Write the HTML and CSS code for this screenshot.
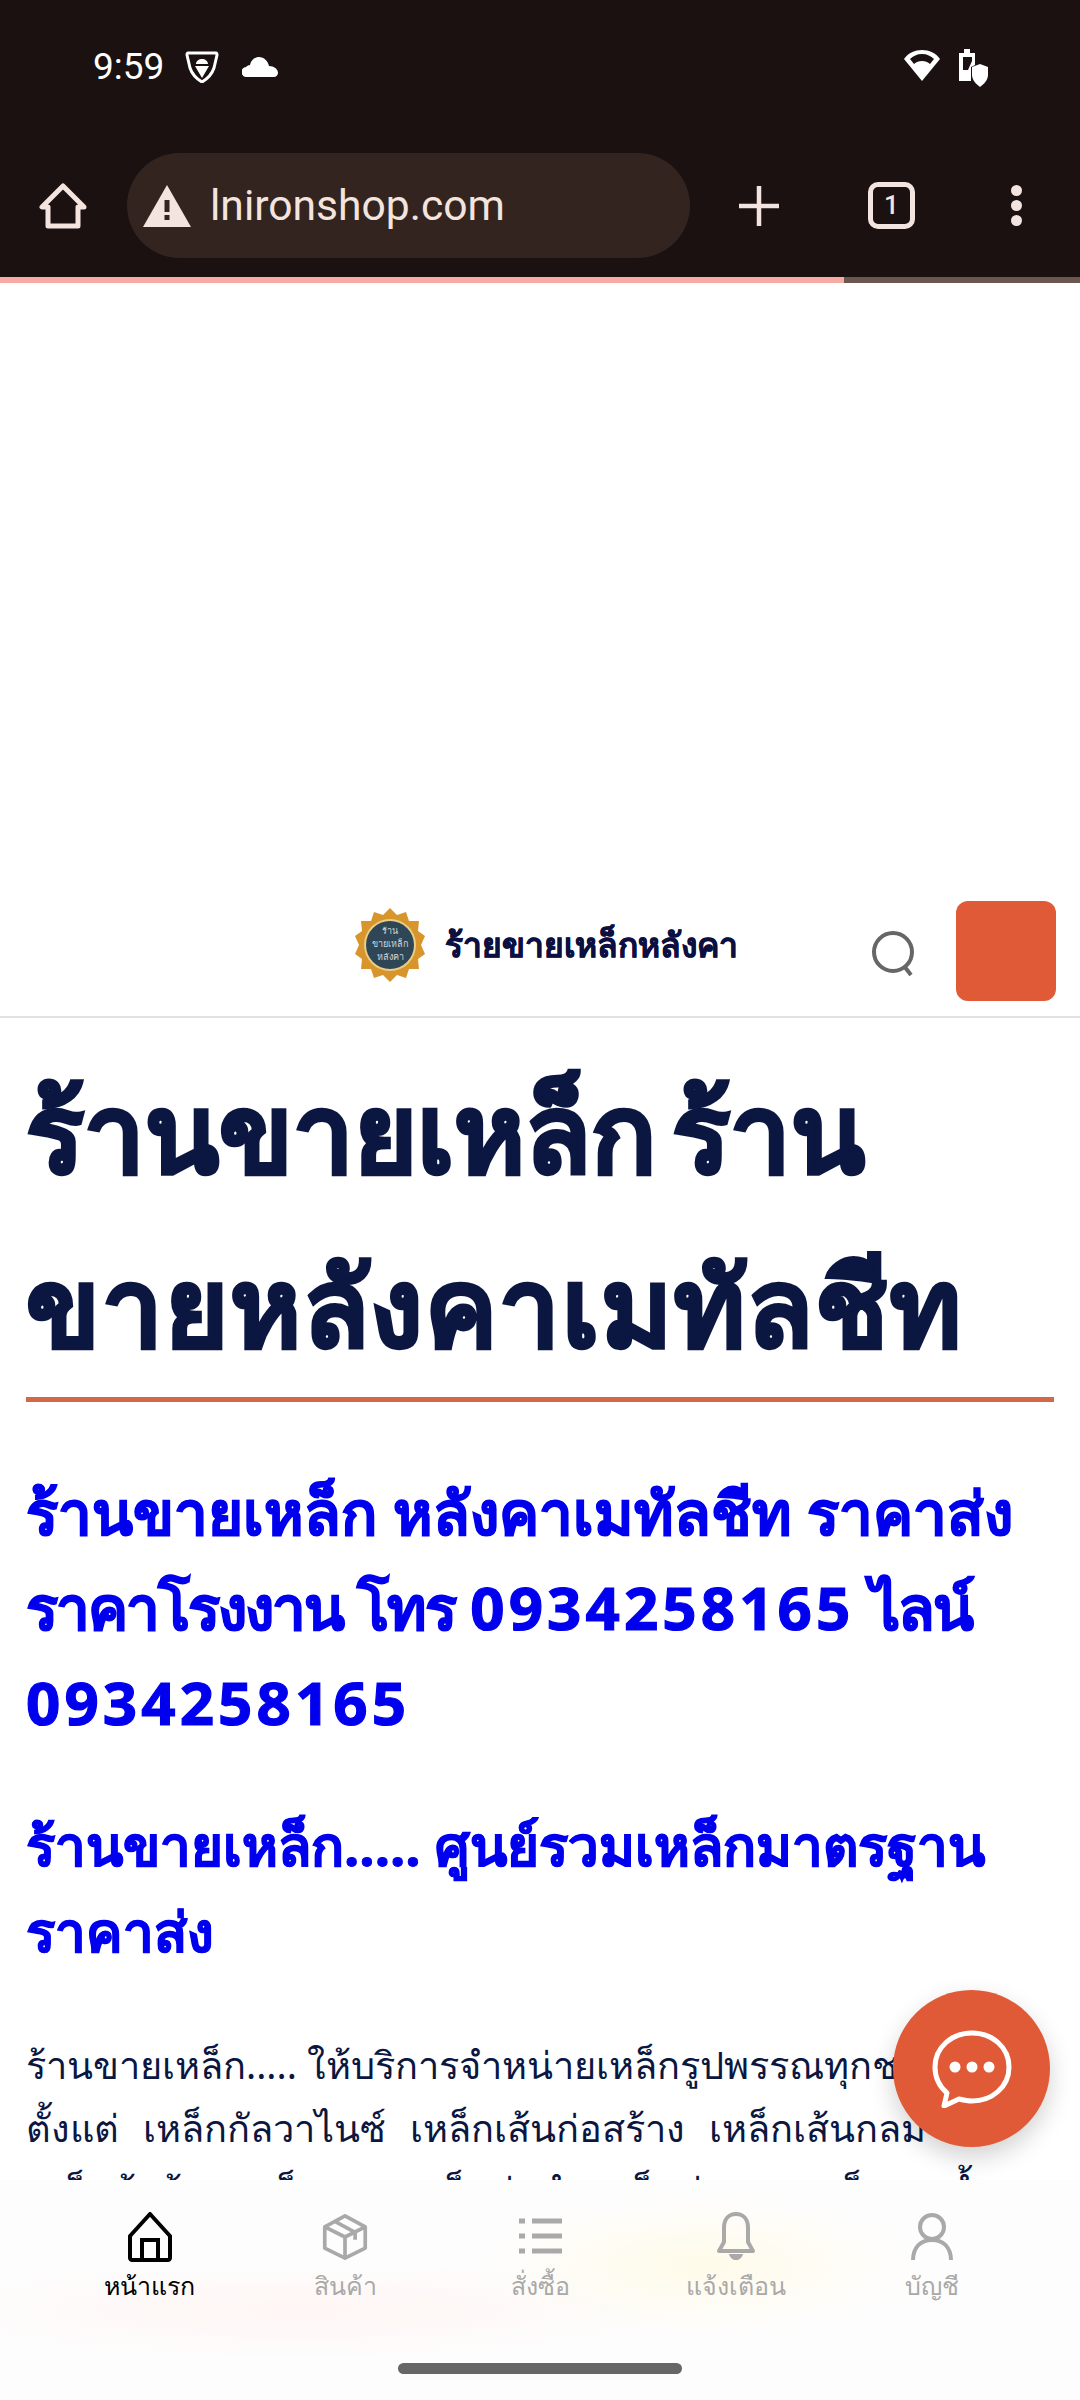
FILE: index.html
```html
<!DOCTYPE html>
<html lang="th">
<head>
<meta charset="utf-8">
<title>ร้านขายเหล็ก</title>
<link rel="stylesheet" href="styles.css">
</head>
<body>
<div class="browser">
  <div class="status">
    <div class="status-left">
      <span class="time">9:59</span>
      <svg class="ic-vpn" viewBox="0 0 34 32"><path d="M3 2h28c1 0 1 1 1 2l-3 13c-2 6-7 11-12 14C12 28 7 23 5 17L2 4c0-1 0-2 1-2Z" fill="none" stroke="#fff" stroke-width="3" stroke-linejoin="round"/><path d="M11 13c0-3 3-5 6-5s6 2 6 5ZM10 15h14l-7 12Z" fill="#fff"/></svg>
      <svg class="ic-cloud" viewBox="0 0 36 20"><path d="M5 20a5 5 0 0 1-1-10c1-1 2-2 4-2 1-5 5-8 9-8 5 0 9 4 10 9 5 0 9 3 9 7 0 2-2 4-4 4Z" fill="#fff"/></svg>
    </div>
    <div class="status-right">
      <svg class="ic-wifi" viewBox="0 0 38 32"><path d="M19 32 1 10C5 4 12 1 19 1s14 3 18 9Z" fill="#fff"/><path d="M7 10c3-3 7-5 12-5s9 2 12 5l-4 5c-2-2-5-3-8-3s-6 1-8 3Z" fill="#1a1110"/></svg>
      <svg class="ic-batt" viewBox="0 0 32 38"><path d="M2 4h5V0h6v4h5v12l-4 2v14H2Z" fill="#fff"/><path d="M6 8h9v4l-4 9H6Z" fill="#1a1110"/><path d="M15 18l8-3 8 3v8c0 5-4 9-8 12-4-3-8-7-8-12Z" fill="#fff"/></svg>
    </div>
  </div>
  <div class="toolbar">
    <svg class="tb-home" viewBox="0 0 48 48"><path d="M24 4 3 25h6v19h30V25h6Z" fill="none" stroke="#f3e4df" stroke-width="5" stroke-linejoin="round"/></svg>
    <div class="omnibox">
      <svg class="warn" viewBox="0 0 48 42"><path d="M24 0 48 42H0Z" fill="#f3e4df"/><rect x="21.500" y="15" width="5" height="12" fill="#33241f"/><rect x="21.500" y="30" width="5" height="5" fill="#33241f"/></svg>
      <span class="url">lnironshop.com</span>
    </div>
    <svg class="tb-plus" viewBox="0 0 44 44"><path d="M22 2v40M2 22h40" stroke="#f3e4df" stroke-width="4.500"/></svg>
    <div class="tabs">1</div>
    <div class="dots"><i></i><i></i><i></i></div>
  </div>
  <div class="progress"><div class="progress-fill"></div></div>
</div>

<div class="page">
  <div class="ad"></div>
  <header class="site-head">
    <div class="brand">
      <svg class="badge" viewBox="0 0 72 74">
        <polygon class="badge-gold" points="36,0 43,7 52,4 55,13 65,13 64,23 71,28 67,37 71,46 64,51 65,61 55,61 52,70 43,67 36,74 29,67 20,70 17,61 7,61 8,51 1,46 5,37 1,28 8,23 7,13 17,13 20,4 29,7"/>
        <circle class="badge-ring" cx="36" cy="37" r="26"/>
        <circle class="badge-core" cx="36" cy="37" r="24"/>
        <text class="badge-text" x="36" y="26">ร้าน</text>
        <text class="badge-text" x="36" y="39">ขายเหล็ก</text>
        <text class="badge-text" x="36" y="52">หลังคา</text>
      </svg>
      <span class="brand-name">ร้ายขายเหล็กหลังคา</span>
    </div>
    <svg class="search" viewBox="0 0 46 46"><circle cx="22" cy="21" r="19" fill="none" stroke="#666" stroke-width="4"/><path d="M33 35l7 9" stroke="#666" stroke-width="4"/></svg>
    <div class="menu-btn"></div>
  </header>
  <main class="content">
    <h1 class="title">ร้านขายเหล็ก ร้าน<br><span class="wide">ขายหลังคาเมทัลชีท</span></h1>
    <h2 class="sub">ร้านขายเหล็ก หลังคาเมทัลชีท ราคาส่ง <span class="tight">ราคาโรงงาน โทร</span> <span class="num">0934258165</span> <span class="tight">ไลน์</span> <span class="num">0934258165</span></h2>
    <h3 class="sub3">ร้านขายเหล็ก..... ศูนย์รวมเหล็กมาตรฐาน ราคาส่ง</h3>
    <p class="body-text">ร้านขายเหล็ก..... ให้บริการจำหน่ายเหล็กรูปพรรณทุกชนิด<br><span class="spread">ตั้งแต่ เหล็กกัลวาไนซ์ เหล็กเส้นก่อสร้าง เหล็กเส้นกลม</span><br>เหล็กข้ออ้อย เหล็กแบน เหล็กท่อดำ เหล็กท่อขาว เหล็กรางน้ำ</p>
  </main>
</div>

<button class="fab" aria-label="แชท">
  <svg viewBox="0 0 80 78"><path d="M40 3c20 0 37 14 37 34S60 71 40 71c-5 0-9-1-13-2L12 76l3-13C8 57 3 48 3 37 3 17 20 3 40 3Z" fill="none" stroke="#fff" stroke-width="5" stroke-linejoin="round"/><circle cx="23" cy="37" r="5.500" fill="#fff"/><circle cx="40" cy="37" r="5.500" fill="#fff"/><circle cx="57" cy="37" r="5.500" fill="#fff"/></svg>
</button>

<nav class="bottom">
  <div class="tabbar">
    <a class="tab active">
      <svg viewBox="0 0 46 50"><path d="M23 2 3 24v22c0 1 1 2 2 2h36c1 0 2-1 2-2V24Z" fill="none" stroke="currentColor" stroke-width="4" stroke-linejoin="round"/><path d="M15 47V28h16v19" fill="none" stroke="currentColor" stroke-width="4"/></svg>
      <span>หน้าแรก</span>
    </a>
    <a class="tab">
      <svg viewBox="0 0 50 50"><path d="M25 2 47 14v23L25 48 3 37V14Z M3 14l22 11 22-11M25 25v23M14 8l22 12v8" fill="none" stroke="currentColor" stroke-width="4" stroke-linejoin="round"/></svg>
      <span>สินค้า</span>
    </a>
    <a class="tab">
      <svg viewBox="0 0 46 50"><path d="M14 9h30M14 24h30M14 39h30M1 9h6M1 24h6M1 39h6" fill="none" stroke="currentColor" stroke-width="5"/></svg>
      <span>สั่งซื้อ</span>
    </a>
    <a class="tab">
      <svg viewBox="0 0 40 50"><path d="M20 2c8 0 12 6 12 14v14l5 9H3l5-9V16C8 8 12 2 20 2Z" fill="none" stroke="currentColor" stroke-width="4" stroke-linejoin="round"/><path d="M13 42c1 4 4 6 7 6s6-2 7-6Z" fill="currentColor"/></svg>
      <span>แจ้งเตือน</span>
    </a>
    <a class="tab">
      <svg viewBox="0 0 44 50"><circle cx="22" cy="15" r="12" fill="none" stroke="currentColor" stroke-width="4"/><path d="M3 48c0-12 7-20 19-20s19 8 19 20" fill="none" stroke="currentColor" stroke-width="4"/></svg>
      <span>บัญชี</span>
    </a>
  </div>
  <div class="home-pill"></div>
</nav>
</body>
</html>
```
FILE: styles.css
```css
* { box-sizing: border-box; }
html, body { margin: 0; padding: 0; width: 1080px; height: 2400px; overflow: hidden; background: #fff; }
body { font-family: "Noto Sans", "DejaVu Sans", sans-serif; position: relative; display: flex; flex-direction: column; }

.browser { background: #1a1110; height: 283px; display: flex; flex-direction: column; flex: none; }
.status { height: 153px; padding: 49px 91px 0 93px; display: flex; justify-content: space-between; align-items: flex-start; }
.status-left { display: flex; align-items: center; gap: 21px; height: 36px; }
.time { font-family: Roboto, sans-serif; font-size: 37px; font-weight: 400; color: #fff; line-height: 36px; }
.ic-vpn { width: 34px; height: 32px; }
.ic-cloud { width: 36px; height: 20px; margin-left: 2px; }
.status-right { display: flex; gap: 16px; align-items: flex-start; height: 38px; }
.ic-wifi { width: 38px; height: 32px; }
.ic-batt { width: 32px; height: 38px; }

.toolbar { height: 105px; display: flex; align-items: center; padding: 0 0 0 39px; flex: none; }
.tb-home { width: 48px; height: 48px; flex: none; }
.omnibox { margin-left: 40px; width: 563px; height: 105px; border-radius: 53px; background: #33241f; display: flex; align-items: center; padding-left: 16px; flex: none; }
.warn { width: 48px; height: 42px; }
.url { margin-left: 19px; margin-top: -2px; font-family: Roboto, sans-serif; font-size: 42.600px; color: #f3e4df; }
.tb-plus { margin-left: 47px; width: 44px; height: 44px; flex: none; }
.tabs { margin-left: 87px; width: 47px; height: 47px; border: 5px solid #f3e4df; border-radius: 10px; color: #f3e4df; font: 500 26px/37px Roboto, sans-serif; text-align: center; flex: none; }
.dots { margin-left: 96px; display: flex; flex-direction: column; gap: 4px; }
.dots i { display: block; width: 11px; height: 11px; border-radius: 50%; background: #f3e4df; }

.progress { margin-top: 19px; height: 6px; background: #6b5650; flex: none; }
.progress-fill { width: 844px; height: 6px; background: #f7aba5; }

.page { flex: 1; overflow: hidden; color: #0b1741; }
.ad { height: 597px; }
.site-head { height: 138px; padding-top: 6px; border-bottom: 2px solid #e2e2e2; display: flex; align-items: center; padding-right: 24px; justify-content: flex-end; }
.brand { display: flex; align-items: center; gap: 19px; margin-right: 133px; margin-top: -12px; }
.badge { width: 72px; height: 74px; flex: none; }
.badge-gold { fill: #d8952c; }
.badge-ring { fill: #e8cf86; }
.badge-core { fill: #2e4655; }
.badge-text { font-size: 9px; fill: #cfd8dc; text-anchor: middle; }
.brand-name { font-size: 33.500px; font-weight: 700; color: #0c0f3f; white-space: nowrap; -webkit-text-stroke: 0.6px #0c0f3f; }
.search { width: 46px; height: 46px; margin-right: 39px; margin-top: 6px; }
.menu-btn { width: 100px; height: 100px; border-radius: 12px; background: #e05a37; }

.content { padding: 0 26px; }
.title { margin: 0; padding: 26px 0 5px; font-size: 108px; line-height: 174px; font-weight: 700; word-spacing: -12px; color: #0b1741; -webkit-text-stroke: 3px #0b1741; border-bottom: 5px solid #d2674a; white-space: nowrap; }
.wide { letter-spacing: 1.900px; }
.sub { margin: 63px 0 0; font-size: 60px; line-height: 95px; font-weight: 700; color: #0000ee; -webkit-text-stroke: 1.200px #0000ee; }
.num { letter-spacing: 4.100px; }
.tight { letter-spacing: -2px; }
.sub3 { margin: 52px 0 0; font-size: 54.600px; line-height: 86px; font-weight: 700; color: #0000ee; -webkit-text-stroke: 1px #0000ee; }
.body-text { margin: 59px 0 0; font-size: 38px; line-height: 63px; white-space: nowrap; }
.spread { word-spacing: 14px; }

.fab { position: absolute; left: 893px; top: 1990px; width: 157px; height: 157px; border-radius: 50%; border: 0; padding: 0; background: #e05a37; box-shadow: 0 10px 24px rgba(0,0,0,.18); display: flex; align-items: center; justify-content: center; z-index: 3; }
.fab svg { width: 80px; height: 78px; }

.bottom { position: absolute; left: 0; right: 0; top: 2180px; bottom: 0; background: radial-gradient(ellipse 220px 70px at 700px 85px, #fffbea, transparent), radial-gradient(ellipse 400px 50px at 300px 130px, #fff6f4, transparent), #fdfdfd; z-index: 2; }
.tabbar { display: grid; grid-template-columns: repeat(5, 195.500px); padding: 32px 0 0 52px; }
.tab { display: flex; flex-direction: column; align-items: center; color: #a9a9a9; font-size: 25px; }
.tab svg { width: 46px; height: 50px; }
.tab span { margin-top: 4px; }
.tab.active { color: #000; }
.home-pill { position: absolute; left: 398px; top: 183px; width: 284px; height: 11px; border-radius: 6px; background: #666; }
```
